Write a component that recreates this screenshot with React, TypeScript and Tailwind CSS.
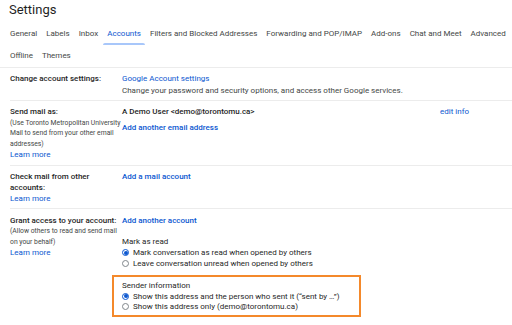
import React from "react";

const font = { fontFamily: "Roboto, 'Noto Sans', Arial, sans-serif" };

function Tab({ label, active }: { label: string; active?: boolean }) {
  return (
    <div className="relative px-[4.5px] h-[22px] flex items-center">
      <span className={active ? "text-[#0b57d0]" : "text-[#444746]"}>{label}</span>
      {active && <div className="absolute left-[0px] right-[0px] bottom-[0px] h-[2px] bg-[#a8c7fa] rounded-t" />}
    </div>
  );
}

function Radio({ checked, label }: { checked?: boolean; label: string }) {
  return (
    <div className="flex items-center h-[10.5px]">
      <div className="w-[11px] flex justify-start pl-[0px]">
        {checked ? (
          <div className="w-[7px] h-[7px] rounded-full border border-[#0b57d0] flex items-center justify-center">
            <div className="w-[4px] h-[4px] rounded-full bg-[#0b57d0]" />
          </div>
        ) : (
          <div className="w-[7px] h-[7px] rounded-full border border-[#80868b]" />
        )}
      </div>
      <span className="text-[#1f1f1f]">{label}</span>
    </div>
  );
}

function Section({ label, children, last }: { label: React.ReactNode; children: React.ReactNode; last?: boolean }) {
  return (
    <div className={"flex pt-[5px] " + (last ? "" : "border-b border-[#ececec] pb-[4px]")}>
      <div className="w-[112px] shrink-0">{label}</div>
      <div className="flex-1">{children}</div>
    </div>
  );
}

export default function App() {
  return (
    <div className="w-[512px] h-[325px] bg-white overflow-hidden relative" style={font}>
      <div className="pl-[9px] pt-[1px] text-[13px] leading-[18px] text-[#1f1f1f]">Settings</div>
      <div className="pl-[5.5px] pt-[4px] flex text-[8px]">
        <Tab label="General" />
        <Tab label="Labels" />
        <Tab label="Inbox" />
        <Tab label="Accounts" active />
        <Tab label="Filters and Blocked Addresses" />
        <Tab label="Forwarding and POP/IMAP" />
        <Tab label="Add-ons" />
        <Tab label="Chat and Meet" />
        <Tab label="Advanced" />
      </div>
      <div className="pl-[5.5px] flex text-[8px]">
        <Tab label="Offline" />
        <Tab label="Themes" />
      </div>
      <div className="border-b border-[#ececec] mt-[0px]" />
      <div className="pl-[10px] text-[8px] leading-[11.5px] text-[#1f1f1f]">
        <Section
          label={<div className="font-medium whitespace-nowrap">Change account settings:</div>}
        >
          <div className="text-[#0b57d0]">Google Account settings</div>
          <div className="text-[#444746] whitespace-nowrap">Change your password and security options, and access other Google services.</div>
        </Section>
        <Section
          label={
            <div>
              <div className="font-medium">Send mail as:</div>
              <div className="text-[6.8px] leading-[10.5px] text-[#444746] whitespace-nowrap">
                (Use Toronto Metropolitan University
                <br />
                Mail to send from your other email
                <br />
                addresses)
              </div>
              <div className="text-[#0b57d0]">Learn more</div>
            </div>
          }
        >
          <div className="flex">
            <div className="font-medium flex-1">A Demo User &lt;demo@torontomu.ca&gt;</div>
            <div className="text-[#0b57d0] w-[72px]">edit info</div>
          </div>
          <div className="text-[#0b57d0] font-medium mt-[4px]">Add another email address</div>
        </Section>
        <Section
          label={
            <div>
              <div className="font-medium">
                Check mail from other
                <br />
                accounts:
              </div>
              <div className="text-[#0b57d0] leading-[10px]">Learn more</div>
            </div>
          }
        >
          <div className="text-[#0b57d0] font-medium">Add a mail account</div>
        </Section>
        <Section
          last
          label={
            <div className="pt-[1px]">
              <div className="font-medium whitespace-nowrap">Grant access to your account:</div>
              <div className="text-[6.8px] leading-[10.5px] text-[#444746] whitespace-nowrap">
                (Allow others to read and send mail
                <br />
                on your behalf)
              </div>
              <div className="text-[#0b57d0]">Learn more</div>
            </div>
          }
        >
          <div className="text-[#0b57d0] font-medium pt-[1px]">Add another account</div>
          <div className="mt-[10px]">Mark as read</div>
          <Radio checked label="Mark conversation as read when opened by others" />
          <Radio label="Leave conversation unread when opened by others" />
          <div className="ml-[-10px] mt-[6px] w-[249px] border-2 border-[#f4892b] pl-[8px] pt-[3px] pb-[3px]">
            <div>Sender information</div>
            <Radio checked label={"Show this address and the person who sent it (\u201csent by \u2026\u201d)"} />
            <Radio label="Show this address only (demo@torontomu.ca)" />
          </div>
        </Section>
      </div>
    </div>
  );
}
